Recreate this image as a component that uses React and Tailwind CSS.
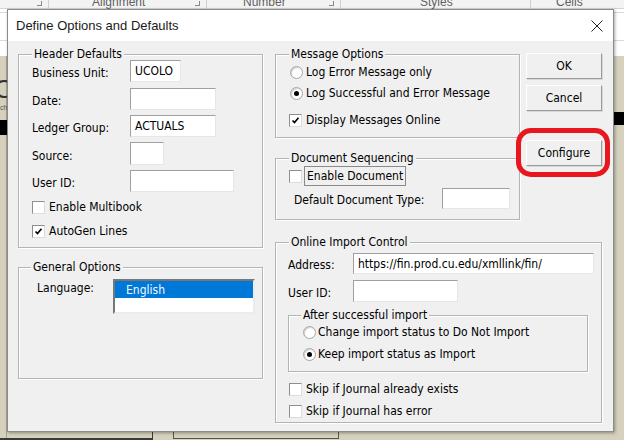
import React from 'react'

const ui = "font-['DejaVu_Sans_Condensed','DejaVu_Sans',sans-serif] text-[12px] text-black"

function Group({ label, labelMl = 'ml-[13px]', className = '', inner = '', children }) {
  return (
    <div className={`border border-[#b4b4b4] shadow-[inset_1px_1px_0_#fff,1px_1px_0_#fff] ${className}`}>
      <div className="flex h-[15px] -mt-[8px] -mb-[7px]">
        <span className={`${labelMl} px-[2px] bg-[#f0f0f0] leading-[15px]`}>{label}</span>
      </div>
      <div className={inner}>{children}</div>
    </div>
  )
}

function Input({ w, h = 'h-[22px]', value }) {
  return (
    <div
      className={`${w} ${h} bg-white border border-t-[#a0a0a0] border-l-[#a0a0a0] border-r-[#e6e6e6] border-b-[#e6e6e6] px-[4px] flex items-center leading-none`}
    >
      {value}
    </div>
  )
}

function Checkbox({ checked }) {
  return (
    <div className="w-[13px] h-[13px] shrink-0 bg-white border border-t-[#8f8f8f] border-l-[#8f8f8f] border-r-[#dcdcdc] border-b-[#dcdcdc] flex items-center justify-center">
      {checked && (
        <svg width="9" height="9" viewBox="0 0 9 9">
          <polyline points="1.5,4.5 3.5,6.5 7.5,1.8" fill="none" stroke="#000" strokeWidth="1.7" />
        </svg>
      )}
    </div>
  )
}

function Radio({ checked }) {
  return (
    <div className="w-[13px] h-[13px] shrink-0 rounded-full bg-white border border-[#a6a6a6] shadow-[inset_1px_1px_1px_#cfcfcf] flex items-center justify-center">
      {checked && <div className="w-[5px] h-[5px] rounded-full bg-black" />}
    </div>
  )
}

function Button({ children }) {
  return (
    <div className="w-[76px] h-[26px] bg-[#f0f0f0] border border-t-white border-l-white border-r-[#9a9a9a] border-b-[#9a9a9a] shadow-[1px_1px_0_#d8d8d8] flex items-center justify-center">
      {children}
    </div>
  )
}

function Field({ label, children, labelW = 'w-[98px]' }) {
  return (
    <div className="flex items-center">
      <span className={`${labelW} pt-[4px] leading-none`}>{label}</span>
      {children}
    </div>
  )
}

export default function App() {
  return (
    <div className="relative w-[624px] h-[440px] overflow-hidden bg-[#d5d1bd]">
      {/* excel behind the dialog */}
      <div className="absolute left-0 top-0 w-[624px] h-[56px] bg-white" />
      <div className="absolute left-0 top-[56px] w-[7px] h-[384px] border-r border-[#a8a594]" />
      <div className="absolute left-0 top-[12px] w-[624px] h-px bg-[#dadada]" />
      <div className="absolute left-0 top-[40px] w-[624px] h-px bg-[#dadada]" />
      <div className="absolute left-0 top-0 w-[624px] h-[9px] bg-[#f3f3f3] border-b border-[#d4d4d4]">
        <div className="flex h-[9px] items-end font-['Liberation_Sans',sans-serif] text-[12px] text-[#5f5f5f] leading-none">
          <span className="absolute left-[92px] -top-[4px]">Alignment</span>
          <span className="absolute left-[243px] -top-[4px]">Number</span>
          <span className="absolute left-[420px] -top-[4px]">Styles</span>
          <span className="absolute left-[556px] -top-[4px]">Cells</span>
          <span className="absolute left-[37px] top-[1px] w-[5px] h-[5px] border-r border-b border-[#888]" />
          <span className="absolute left-[195px] top-[1px] w-[5px] h-[5px] border-r border-b border-[#888]" />
          <span className="absolute left-[329px] top-[1px] w-[5px] h-[5px] border-r border-b border-[#888]" />
          <span className="absolute left-[48px] top-0 w-px h-[9px] bg-[#d0d0d0]" />
          <span className="absolute left-[206px] top-0 w-px h-[9px] bg-[#d0d0d0]" />
          <span className="absolute left-[340px] top-0 w-px h-[9px] bg-[#d0d0d0]" />
          <span className="absolute left-[530px] top-0 w-px h-[9px] bg-[#d0d0d0]" />
        </div>
      </div>
      <span className="absolute -left-[6px] top-[76px] font-['Liberation_Sans',sans-serif] text-[26px] leading-none text-[#333]">C</span>
      <span className="absolute left-0 top-[104px] font-['Liberation_Sans',sans-serif] text-[7px] leading-none text-[#555]">ch</span>
      <div className="absolute left-0 top-[120px] w-[7px] h-[15px] bg-black" />
      <div className="absolute left-[613px] top-[112px] w-[11px] h-[13px] bg-black" />
      <div className="absolute left-0 top-[438px] w-[153px] h-[2px] bg-[#3a3a3a]" />
      <div className="absolute left-[152px] top-[432px] w-px h-[8px] bg-[#3a3a3a]" />
      <div className="absolute left-[173px] top-[432px] w-[166px] h-[7px] border-l border-r border-b border-[#555]" />

      {/* dialog */}
      <div className={`absolute left-[7px] top-[9px] w-[607px] h-[423px] border border-[#8c8c8c] shadow-[1px_1px_3px_rgba(0,0,0,0.35)] bg-[#f0f0f0] flex flex-col ${ui}`}>
        <div className="h-[31px] bg-white flex items-center justify-between pl-[8px] pr-[10px]">
          <span className="font-['Liberation_Sans',sans-serif] text-[13px] text-[#1a1a1a]">Define Options and Defaults</span>
          <svg width="12" height="12" viewBox="0 0 12 12">
            <path d="M0.5 0.5 L11.5 11.5 M11.5 0.5 L0.5 11.5" stroke="#222" strokeWidth="1" />
          </svg>
        </div>

        <div className="flex pl-[10px] pt-[13px]">
          {/* left column */}
          <div className="w-[245px] flex flex-col">
            <Group label="Header Defaults" inner="pl-[13px] pt-[5px] pb-[8px]">
              <Field label="Business Unit:">
                <Input w="w-[51px]" value="UCOLO" />
              </Field>
              <div className="mt-[6px]">
                <Field label="Date:"><Input w="w-[86px]" /></Field>
              </div>
              <div className="mt-[5px]">
                <Field label="Ledger Group:"><Input w="w-[86px]" value="ACTUALS" /></Field>
              </div>
              <div className="mt-[5px]">
                <Field label="Source:"><Input w="w-[34px]" h="h-[23px]" /></Field>
              </div>
              <div className="mt-[5px]">
                <Field label="User ID:"><Input w="w-[104px]" /></Field>
              </div>
              <div className="mt-[7px] h-[16px] flex items-center gap-[4px]">
                <Checkbox />
                <span>Enable Multibook</span>
              </div>
              <div className="mt-[8px] h-[16px] flex items-center gap-[4px]">
                <Checkbox checked />
                <span>AutoGen Lines</span>
              </div>
            </Group>

            <Group label="General Options" labelMl="ml-[12px]" className="mt-[19px]" inner="pl-[18px] pt-[11px] pb-[64px]">
              <div className="flex items-start">
                <span className="w-[76px] mt-[2px] leading-[15px]">Language:</span>
                <div className="w-[142px] h-[35px] bg-white border-2 border-t-[#777] border-l-[#777] border-r-[#ececec] border-b-[#ececec]">
                  <div className="h-[17px] bg-[#0078d7] text-[#f2f7fd] pl-[11px] flex items-center leading-none">English</div>
                </div>
              </div>
            </Group>
          </div>

          {/* right column */}
          <div className="ml-[12px] w-[327px] flex flex-col">
            <div className="flex">
              <div className="w-[246px] flex flex-col">
                <Group label="Message Options" inner="pt-[9px] pb-[9px]">
                  <div className="h-[16px] flex items-center pl-[14px] gap-[3px]">
                    <Radio />
                    <span>Log Error Message only</span>
                  </div>
                  <div className="mt-[5px] h-[16px] flex items-center pl-[14px] gap-[3px]">
                    <Radio checked />
                    <span>Log Successful and Error Message</span>
                  </div>
                  <div className="mt-[11px] h-[16px] flex items-center pl-[13px] gap-[4px]">
                    <Checkbox checked />
                    <span>Display Messages Online</span>
                  </div>
                </Group>

                <Group label="Document Sequencing" className="mt-[20px]" inner="pb-[10px]">
                  <div className="mt-[7px] h-[20px] flex items-center pl-[13px] gap-[2px]">
                    <Checkbox />
                    <span className="h-[20px] px-[2px] border border-[#8a8a8a] flex items-center">Enable Document</span>
                  </div>
                  <div className="mt-[2px] flex items-center pl-[18px]">
                    <span className="w-[148px] pt-[3px] leading-none">Default Document Type:</span>
                    <Input w="w-[68px]" h="h-[21px]" />
                  </div>
                </Group>
              </div>

              <div className="ml-[6px] -mt-[1px] flex flex-col">
                <Button>OK</Button>
                <div className="mt-[6px]">
                  <Button>Cancel</Button>
                </div>
                <div className="relative mt-[29px]">
                  <Button>Configure</Button>
                  <div className="absolute -left-[10px] -top-[12px] -right-[8px] -bottom-[11px] border-[5px] border-[#e8161f] rounded-[15px]" />
                </div>
              </div>
            </div>

            <Group label="Online Import Control" className="mt-[22px]" inner="pb-[3px]">
              <div className="mt-[10px] flex items-center pl-[12px]">
                <span className="w-[65px] pt-[3px] leading-none">Address:</span>
                <Input w="w-[241px]" h="h-[21px]" value="https://fin.prod.cu.edu/xmllink/fin/" />
              </div>
              <div className="mt-[6px] flex items-center pl-[12px]">
                <span className="w-[65px] pt-[3px] leading-none">User ID:</span>
                <Input w="w-[105px]" />
              </div>
              <Group label="After successful import" labelMl="ml-[12px]" className="mt-[13px] ml-[12px] w-[300px]" inner="pb-[9px]">
                <div className="mt-[8px] h-[16px] flex items-center pl-[14px] gap-[2px]">
                  <Radio />
                  <span>Change import status to Do Not Import</span>
                </div>
                <div className="mt-[6px] h-[16px] flex items-center pl-[14px] gap-[2px]">
                  <Radio checked />
                  <span>Keep import status as Import</span>
                </div>
              </Group>
              <div className="mt-[9px] h-[16px] flex items-center pl-[13px] gap-[4px]">
                <Checkbox />
                <span>Skip if Journal already exists</span>
              </div>
              <div className="mt-[6px] h-[16px] flex items-center pl-[13px] gap-[4px]">
                <Checkbox />
                <span>Skip if Journal has error</span>
              </div>
            </Group>
          </div>
        </div>
      </div>
    </div>
  )
}
